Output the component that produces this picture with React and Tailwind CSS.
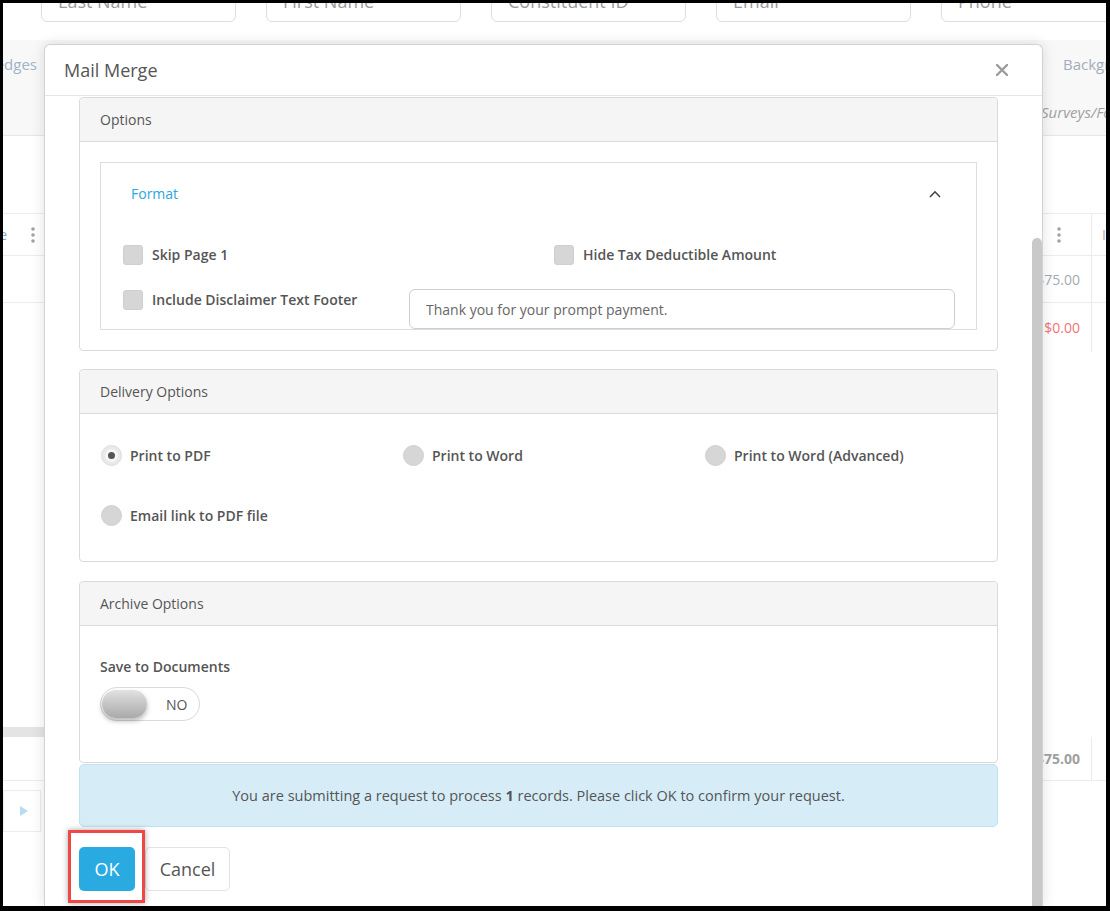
import React from "react";

const filterFields = ["Last Name", "First Name", "Constituent ID", "Email", "Phone"];

function Dots() {
  return (
    <svg width="4" height="16" viewBox="0 0 4 16">
      <circle cx="2" cy="2" r="1.8" fill="#9ba3ab" />
      <circle cx="2" cy="8" r="1.8" fill="#9ba3ab" />
      <circle cx="2" cy="14" r="1.8" fill="#9ba3ab" />
    </svg>
  );
}

// page behind the dialog, mostly covered
function BackgroundPage() {
  return (
    <div className="flex flex-col">
      <div className="h-[37px] overflow-hidden">
        <div className="flex gap-[30px] pl-[38px] -mt-[21px]">
          {filterFields.map((f) => (
            <div
              key={f}
              className="w-[195px] h-[40px] shrink-0 border border-[#dedede] rounded-[6px] px-[16px] pt-[6px] text-[18px] leading-[24px] text-[#9a9a9a]"
            >
              {f}
            </div>
          ))}
        </div>
      </div>

      <div className="h-[96px] bg-[#f8f8f8] border-b border-[#e6e6e6] flex justify-between">
        <div className="w-[34px] overflow-hidden flex justify-end pt-[14px]">
          <span className="text-[15px] leading-[20px] text-[#9fb3c6] whitespace-nowrap">Pledges</span>
        </div>
        <div className="w-[65px] overflow-hidden flex flex-col pt-[14px]">
          <span className="pl-[22px] text-[15px] leading-[20px] text-[#a3adb8] whitespace-nowrap">Background</span>
          <span className="mt-[28px] text-[15px] leading-[20px] italic text-[#a0a0a0] whitespace-nowrap">Surveys/Forms</span>
        </div>
      </div>

      <div className="h-[77px]" />

      <div className="h-[43px] border-y border-[#ececec] flex justify-between">
        <div className="w-[42px] flex items-center justify-between pr-[10px]">
          <span className="w-[4px] overflow-hidden flex justify-end">
            <span className="text-[14px] text-[#7fa8cc] whitespace-nowrap">Type</span>
          </span>
          <Dots />
        </div>
        <div className="w-[106px] flex">
          <div className="w-[92px] border-r border-[#ececec] flex items-center justify-end pr-[30px]">
            <Dots />
          </div>
          <div className="flex-1 overflow-hidden flex items-center pl-[10px]">
            <span className="text-[14px] text-[#aaa]">Id</span>
          </div>
        </div>
      </div>

      <div className="h-[47px] border-b border-[#ececec] flex justify-end">
        <div className="w-[106px] flex">
          <div className="w-[92px] border-r border-[#ececec] flex items-center justify-end pr-[11px] text-[14px] text-[#a3abb3]">
            $75.00
          </div>
        </div>
      </div>
      <div className="h-[49px] flex justify-end">
        <div className="w-[106px] flex">
          <div className="w-[92px] border-r border-[#ececec] flex items-center justify-end pr-[11px] text-[14px] text-[#f27474]">
            $0.00
          </div>
        </div>
      </div>

      <div className="h-[375px]" />

      <div className="h-[10px] w-[60px] bg-[#e4e4e4]" />
      <div className="h-[44px] border-b border-[#ececec] flex justify-end">
        <div className="w-[106px] flex">
          <div className="w-[92px] border-r border-[#ececec] flex items-center justify-end pr-[11px] text-[14px] font-bold text-[#a0a0a0]">
            $75.00
          </div>
        </div>
      </div>
      <div className="mt-[9px] w-[38px] h-[42px] border border-[#ececec] flex items-center pl-[16px]">
        <svg width="8" height="10" viewBox="0 0 8 10">
          <path d="M0 0 L8 5 L0 10 Z" fill="#b5dcf0" />
        </svg>
      </div>
    </div>
  );
}

function Panel({ title, children, className }) {
  return (
    <div className={"rounded-[4px] border border-[#dadada] bg-white " + className}>
      <div className="h-[44px] flex items-center px-[20px] bg-[#f5f5f5] border-b border-[#dadada] rounded-t-[4px] text-[14px] text-[#555]">
        {title}
      </div>
      {children}
    </div>
  );
}

function Checkbox({ label }) {
  return (
    <div className="flex items-center">
      <span className="w-[20px] h-[20px] shrink-0 rounded-[3px] bg-[#d6d6d6] border border-[#cfcfcf]" />
      <span className="ml-[9px] text-[14px] leading-[20px] font-semibold text-[#555] whitespace-nowrap">{label}</span>
    </div>
  );
}

function Radio({ label, checked }) {
  return (
    <div className="flex items-center">
      {checked ? (
        <span className="w-[21px] h-[21px] rounded-full bg-[#e9e9e9] border border-[#dcdcdc] flex items-center justify-center">
          <span className="w-[13px] h-[13px] rounded-full bg-[#f6f6f6] flex items-center justify-center">
            <span className="w-[7px] h-[7px] rounded-full bg-[#555]" />
          </span>
        </span>
      ) : (
        <span className="w-[21px] h-[21px] rounded-full bg-[#d6d6d6] border border-[#d0d0d0]" />
      )}
      <span className="ml-[8px] text-[14px] leading-[20px] font-semibold text-[#555] whitespace-nowrap">{label}</span>
    </div>
  );
}

function MailMergeModal() {
  return (
    <div className="absolute left-[41px] top-[41px] bottom-0 w-[999px] bg-white border border-b-0 border-[#d2d2d2] rounded-t-[6px] shadow-[0_0_14px_rgba(0,0,0,0.12)] flex flex-col">
      <div className="h-[51px] shrink-0 border-b border-[#e5e5e5] flex items-center justify-between pl-[19px] pr-[34px]">
        <span className="text-[18px] text-[#555]">Mail Merge</span>
        <svg width="12" height="12" viewBox="0 0 12 12">
          <path d="M1 1 L11 11 M11 1 L1 11" stroke="#9c9c9c" strokeWidth="2.4" strokeLinecap="round" />
        </svg>
      </div>

      <div className="flex-1 flex overflow-hidden">
        <div className="flex-1 min-w-0 px-[34px] pt-[1px]">
          <Panel title="Options" className="mb-[18px]">
            <div className="p-[20px]">
              <div className="border border-[#dddddd]">
                <div className="flex items-center justify-between pt-[20px] pl-[30px] pr-[35px] h-[42px]">
                  <span className="text-[14px] leading-[22px] text-[#2aa6e0]">Format</span>
                  <svg width="12" height="8" viewBox="0 0 12 8">
                    <path d="M1 7 L6 1.8 L11 7" stroke="#444" strokeWidth="1.6" fill="none" />
                  </svg>
                </div>
                <div className="pl-[22px] pr-[21px] mt-[40px]">
                  <div className="flex">
                    <div className="w-[431px] shrink-0">
                      <Checkbox label="Skip Page 1" />
                    </div>
                    <Checkbox label="Hide Tax Deductible Amount" />
                  </div>
                  <div className="flex items-start mt-[24px]">
                    <div className="w-[286px] shrink-0 pt-[1px]">
                      <Checkbox label="Include Disclaimer Text Footer" />
                    </div>
                    <input
                      readOnly
                      placeholder="Thank you for your prompt payment."
                      className="flex-1 min-w-0 h-[40px] border border-[#cfcfcf] rounded-[6px] px-[16px] text-[14px] text-[#666] placeholder:text-[#666] outline-none"
                    />
                  </div>
                </div>
              </div>
            </div>
          </Panel>

          <Panel title="Delivery Options" className="mb-[19px]">
            <div className="pl-[21px] pt-[31px] pb-[35px] grid grid-cols-[302px_302px_1fr] gap-y-[39px]">
              <Radio label="Print to PDF" checked />
              <Radio label="Print to Word" />
              <Radio label="Print to Word (Advanced)" />
              <Radio label="Email link to PDF file" />
            </div>
          </Panel>

          <Panel title="Archive Options">
            <div className="px-[20px] pt-[31px] pb-[41px]">
              <div className="text-[14px] leading-[20px] font-semibold text-[#555]">Save to Documents</div>
              <div className="mt-[10px] w-[100px] h-[34px] rounded-full border border-[#dadada] bg-white flex items-center pl-[1px]">
                <span className="w-[45px] h-[28px] rounded-full bg-gradient-to-b from-[#e2e2e2] to-[#a9a9a9] shadow-[0_3px_5px_rgba(0,0,0,0.28)]" />
                <span className="ml-[19px] text-[14px] text-[#555]">NO</span>
              </div>
            </div>
          </Panel>

          <div className="mt-[1px] h-[63px] rounded-[5px] border border-[#bfe2f2] bg-[#d6edf8] flex items-center justify-center text-[14.5px] text-[#555]">
            <span>
              You are submitting a request to process <b>1</b> records. Please click OK to confirm your request.
            </span>
          </div>

          <div className="mt-[20px] flex gap-[10px]">
            <div className="relative">
              <button className="w-[56px] h-[44px] rounded-[5px] bg-[#29abe2] text-white text-[18px]">OK</button>
              <div className="absolute -left-[11px] -top-[17px] w-[77px] h-[73px] border-[3px] border-[#ef4646] shadow-[0_0_6px_rgba(0,0,0,0.35)] pointer-events-none" />
            </div>
            <button className="w-[85px] h-[44px] rounded-[5px] border border-[#e3e3e3] bg-white text-[#555] text-[18px]">Cancel</button>
          </div>
        </div>

        <div className="w-[10px] shrink-0 flex flex-col">
          <div className="mt-[142px] flex-1 bg-[#c9c9c9] rounded-t-[5px]" />
        </div>
      </div>
    </div>
  );
}

export default function App() {
  return (
    <div className="relative w-[1110px] h-[911px] overflow-hidden border-t-[3px] border-l-[3px] border-r-[4px] border-b-[5px] border-black bg-white font-['Open_Sans',sans-serif]">
      <BackgroundPage />
      <MailMergeModal />
    </div>
  );
}
